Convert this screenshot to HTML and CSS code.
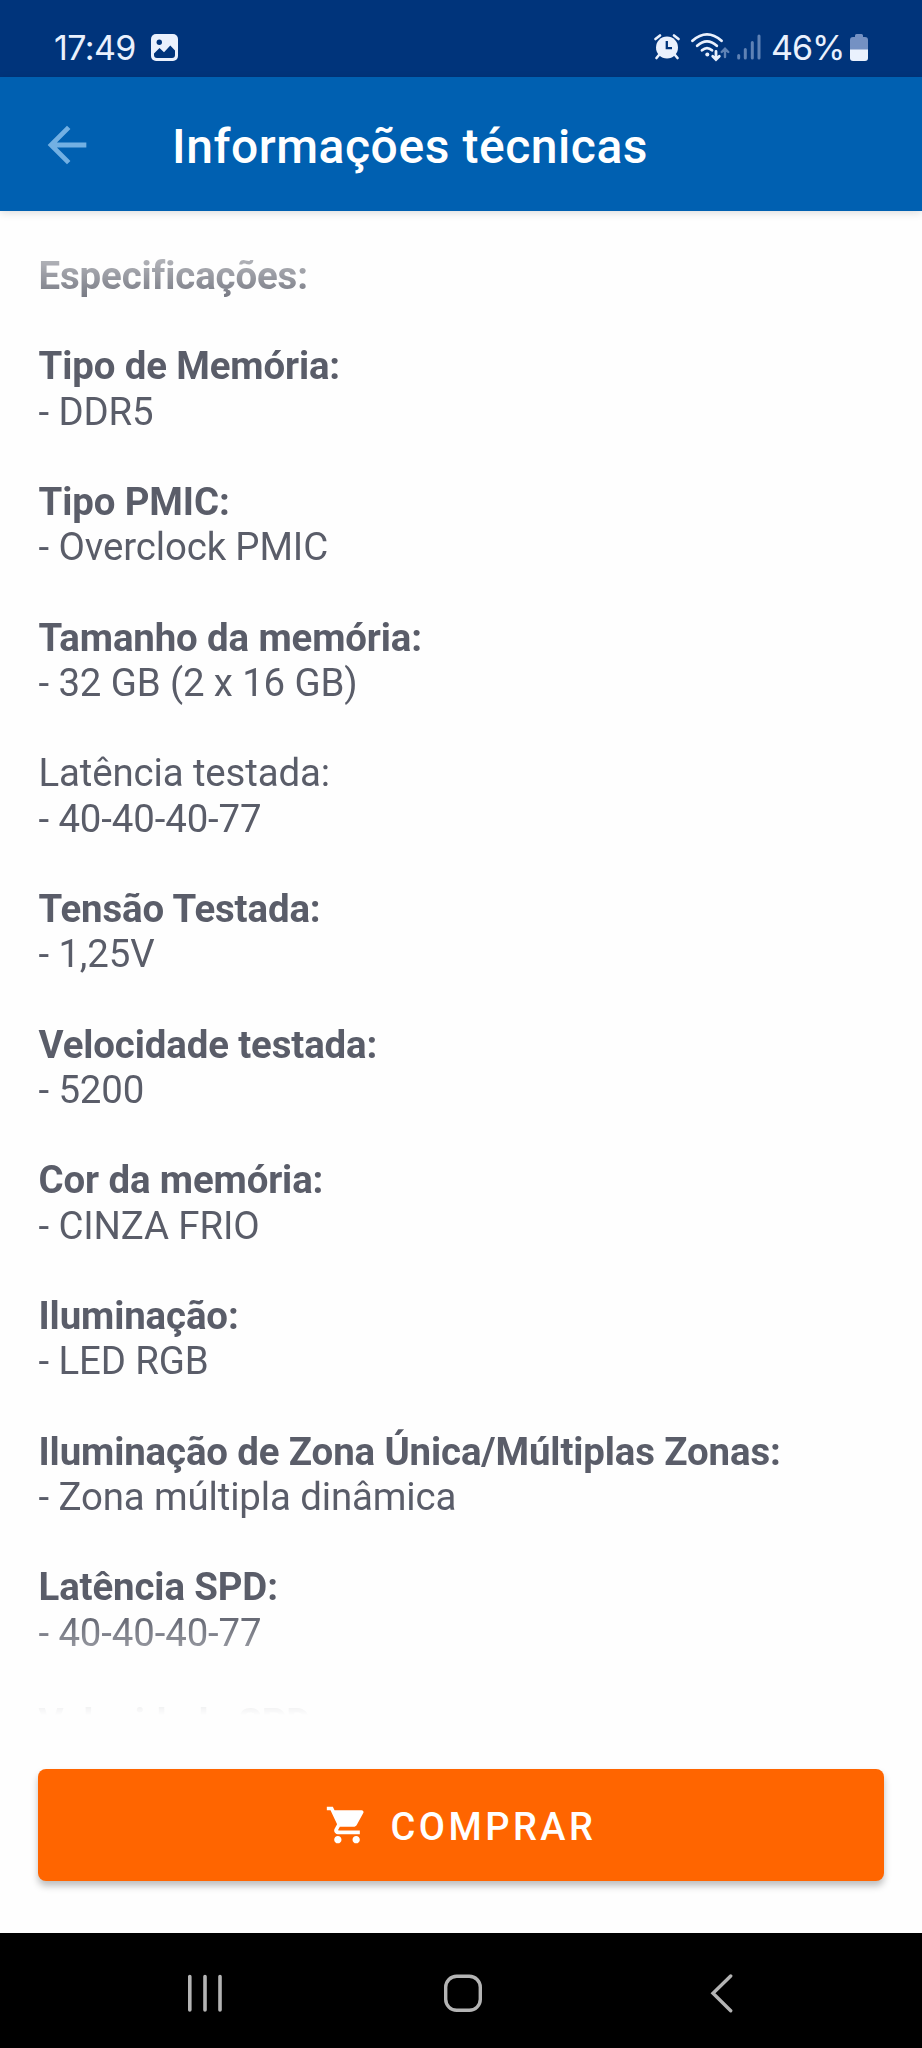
FILE: index.html
```
<!DOCTYPE html>
<html lang="pt-BR">
<head>
    <meta charset="UTF-8">
    <meta name="viewport" content="width=device-width, initial-scale=1.0">
    <title>Informações técnicas</title>
    <link rel="stylesheet" href="styles.css">
</head>
<body>
    <div class="status-bar">
        <span class="clock">17:49</span>
        <svg class="icon-image" width="27" height="27" viewBox="0 0 27 27">
            <rect width="27" height="27" rx="5" fill="#eaf1fd"/>
            <circle cx="8.3" cy="8.3" r="2.7" fill="#00347b"/>
            <path d="M3 19.5 L8.5 14 L13 18.3 L19.3 11.5 L24 16.5 V21 Q24 24 21 24 H6 Q3 24 3 21 Z" fill="#00347b"/>
        </svg>
        <div class="status-right">
            <svg width="26" height="26" viewBox="0 0 26 26">
                <circle cx="13" cy="13.5" r="11" fill="#eaf1fd"/>
                <path d="M1.5 5 L6 1.5 M24.5 5 L20 1.5 M5 21 L2.5 24 M21 21 L23.5 24" stroke="#eaf1fd" stroke-width="2.6" stroke-linecap="round"/>
                <path d="M12.8 7 V14.2 H18" fill="none" stroke="#00347b" stroke-width="2.3"/>
            </svg>
            <svg class="icon-wifi" width="39" height="30" viewBox="0 0 39 30">
                <g fill="none" stroke="#eaf1fd" stroke-width="2.8" stroke-linecap="round">
                    <path d="M1.5 8.8 Q16 -4 30.5 8.8"/>
                    <path d="M6.2 13.7 Q16 5 25.8 13.7"/>
                    <path d="M11 18.3 Q16 14 21 18.3"/>
                    <path d="M25 19.5 V27 M21.7 24.3 L25 27.5 L28.3 24.3"/>
                </g>
                <circle cx="16.3" cy="22.5" r="2" fill="#eaf1fd"/>
                <path d="M34 25 V17 M30.7 20 L34 16.7 L37.3 20" fill="none" stroke="#5f82b5" stroke-width="2.4" stroke-linecap="round"/>
            </svg>
            <svg class="icon-signal" width="24" height="26" viewBox="0 0 24 26">
                <path d="M1.7 21.5 V24 M8.3 15.5 V24 M15.3 8.5 V24 M22 2 V24" stroke="#5f82b5" stroke-width="3" stroke-linecap="round"/>
            </svg>
            <span class="battery-text">46%</span>
            <svg class="icon-battery" width="18" height="27" viewBox="0 0 18 27">
                <path d="M5 3 V1.5 Q5 0 6.5 0 H11.5 Q13 0 13 1.5 V3 H15 Q18 3 18 6 V16 H0 V6 Q0 3 3 3 Z" fill="#7491c3"/>
                <path d="M0 15.5 H18 V24 Q18 27 15 27 H3 Q0 27 0 24 Z" fill="#eaf1fd"/>
            </svg>
        </div>
    </div>

    <header class="app-bar">
        <svg class="icon-back" width="58" height="58" viewBox="0 0 24 24" fill="#72b0e3">
            <path d="M20 11H7.83l5.59-5.59L12 4l-8 8 8 8 1.41-1.41L7.83 13H20v-2z"/>
        </svg>
        <h1>Informações técnicas</h1>
    </header>

    <main class="specs">
        <p><b>Especificações:</b></p>
        <p><b>Tipo de Memória:</b><br>- DDR5</p>
        <p><b>Tipo PMIC:</b><br>- Overclock PMIC</p>
        <p><b>Tamanho da memória:</b><br>- 32 GB (2 x 16 GB)</p>
        <p>Latência testada:<br>- 40-40-40-77</p>
        <p><b>Tensão Testada:</b><br>- 1,25V</p>
        <p><b>Velocidade testada:</b><br>- 5200</p>
        <p><b>Cor da memória:</b><br>- CINZA FRIO</p>
        <p><b>Iluminação:</b><br>- LED RGB</p>
        <p><b>Iluminação de Zona Única/Múltiplas Zonas:</b><br>- Zona múltipla dinâmica</p>
        <p><b>Latência SPD:</b><br>- 40-40-40-77</p>
        <p><b>Velocidade SPD:</b></p>
    </main>

    <div class="buy-area">
        <button class="buy-button" type="button">
            <svg width="44" height="44" viewBox="0 0 24 24" fill="#fff">
                <path d="M7 18c-1.1 0-1.99.9-1.99 2S5.9 22 7 22s2-.9 2-2-.9-2-2-2zM1 2v2h2l3.6 7.59-1.35 2.45c-.16.28-.25.61-.25.96 0 1.1.9 2 2 2h12v-2H7.42c-.14 0-.25-.11-.25-.25l.03-.12.9-1.63h7.45c.75 0 1.41-.41 1.75-1.03l3.58-6.49c.08-.14.12-.31.12-.48 0-.55-.45-1-1-1H5.21l-.94-2H1zm16 16c-1.1 0-1.99.9-1.99 2s.89 2 1.99 2 2-.9 2-2-.9-2-2-2z"/>
            </svg>
            <span>COMPRAR</span>
        </button>
    </div>

    <nav class="nav-bar">
        <svg width="38" height="40" viewBox="0 0 38 40">
            <path d="M3.8 3.5 V37 M19 3.5 V37 M34 3.5 V37" stroke="#b4b4b4" stroke-width="3.6" stroke-linecap="round"/>
        </svg>
        <svg width="38" height="40" viewBox="0 0 38 40">
            <rect x="1.7" y="3.3" width="34.6" height="34" rx="11" fill="none" stroke="#b4b4b4" stroke-width="3.4"/>
        </svg>
        <svg width="38" height="40" viewBox="0 0 38 40">
            <path d="M28.7 3 L11 20.3 L28.7 37.7" fill="none" stroke="#b4b4b4" stroke-width="3.4" stroke-linecap="round"/>
        </svg>
    </nav>
</body>
</html>
```
FILE: styles.css
```
* {
    box-sizing: border-box;
}
body {
    font-family: Roboto, sans-serif;
    background-color: #fefefe;
    color: #5a5d69;
    margin: 0;
    height: 2048px;
    display: flex;
    flex-direction: column;
    overflow: hidden;
}
svg {
    display: block;
    flex: none;
}
.status-bar {
    flex: none;
    height: 77px;
    padding: 17px 54px 0 54px;
    background-color: #00347b;
    color: #eaf1fd;
    display: flex;
    align-items: center;
    font-family: Inter, sans-serif;
    font-size: 34px;
}
.clock {
    width: 97px;
    letter-spacing: -0.6px;
}
.status-right {
    margin-left: auto;
    display: flex;
    align-items: center;
}
.icon-wifi {
    margin-left: 11px;
}
.icon-signal {
    margin-left: 7px;
}
.battery-text {
    width: 77px;
    padding-left: 10px;
    letter-spacing: -1px;
    white-space: nowrap;
}
.icon-battery {
    margin-left: 12px;
}
.app-bar {
    flex: none;
    height: 134px;
    padding: 1px 0 0 38px;
    background-color: #0060b1;
    color: #fff;
    display: flex;
    align-items: center;
    box-shadow: 0 2px 8px rgba(0, 0, 0, 0.13);
    z-index: 1;
}
.icon-back {
    margin-right: 76px;
}
h1 {
    margin: 5px 0 0;
    font-size: 48px;
    font-weight: 500;
    line-height: 56px;
    letter-spacing: 0.55px;
}
.specs {
    height: 1504px;
    flex: none;
    padding: 42px 38px 0 38.5px;
    font-size: 38.4px;
    line-height: 45.22px;
    letter-spacing: -0.12px;
    overflow: hidden;
    /* fading edges of the scroll area */
    -webkit-mask-image: linear-gradient(to bottom, transparent 0, #000 105px, #000 1399px, transparent 1504px);
    mask-image: linear-gradient(to bottom, transparent 0, #000 105px, #000 1399px, transparent 1504px);
}
.specs p {
    margin: 0 0 45.22px;
}
.buy-area {
    flex: none;
    height: 218px;
    padding: 54px 38px 0;
}
.buy-button {
    width: 846px;
    height: 112px;
    padding: 0;
    border: none;
    border-radius: 8px;
    background-color: #ff6500;
    color: #fff;
    box-shadow: 0 5px 7px rgba(0, 0, 0, 0.25);
    display: flex;
    align-items: center;
    justify-content: center;
    gap: 21px;
    font-family: Roboto, sans-serif;
    font-size: 38px;
    font-weight: 500;
    letter-spacing: 3.5px;
}
.buy-button span {
    padding-top: 3px;
}
.nav-bar {
    flex: 1;
    padding: 4px 0 0 4px;
    background-color: #000;
    display: flex;
    align-items: center;
    justify-content: center;
    gap: 220px;
}
```
